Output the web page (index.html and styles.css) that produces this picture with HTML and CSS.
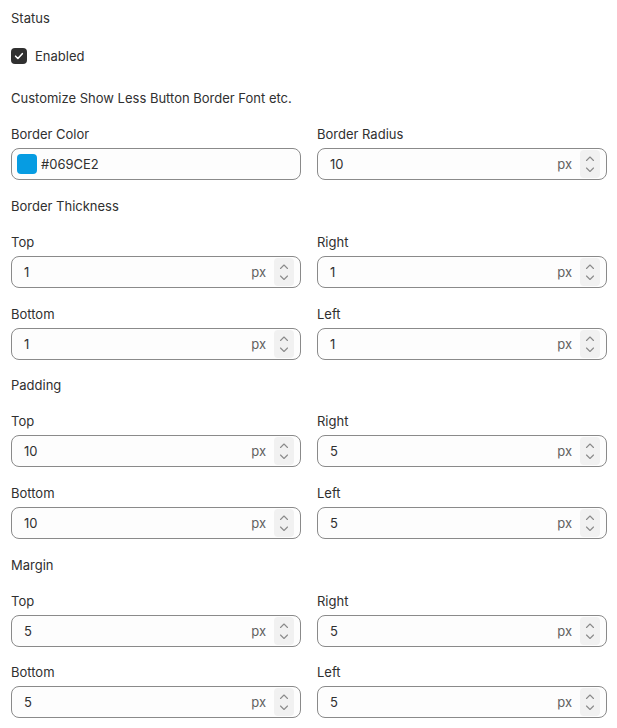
FILE: index.html
```html
<!DOCTYPE html>
<html lang="en">
<head>
    <meta charset="UTF-8">
    <title>Show Less Button Border</title>
    <link rel="stylesheet" href="styles.css">
</head>
<body>
    <div class="settings">
        <div class="status">
            <div class="title">Status</div>
            <label class="check">
                <span class="box">
                    <svg width="16" height="16" viewBox="0 0 16 16"><path d="M4.6 8.2l2.3 2.3 4.4-4.8" fill="none" stroke="#fff" stroke-width="1.6" stroke-linecap="round" stroke-linejoin="round"/></svg>
                </span>
                <span>Enabled</span>
            </label>
        </div>

        <div class="intro">Customize Show Less Button Border Font etc.</div>

        <div class="grid">
            <div class="field">
                <div class="label">Border Color</div>
                <div class="input color">
                    <span class="swatch"></span>
                    <span class="value">#069CE2</span>
                </div>
            </div>
            <div class="field">
                <div class="label">Border Radius</div>
                <div class="input number">
                    <span class="value">10</span>
                    <span class="suffix">px</span>
                    <span class="spinner"><svg width="20" height="28" viewBox="0 0 20 28"><path d="M6.5 10.5L10 7l3.5 3.5M6.5 18l3.5 3.5 3.5-3.5" fill="none" stroke="#8a8a8a" stroke-width="1.1" stroke-linecap="round" stroke-linejoin="round"/></svg></span>
                </div>
            </div>
        </div>

        <div class="title">Border Thickness</div>
        <div class="grid" id="border"></div>

        <div class="title tight">Padding</div>
        <div class="grid" id="padding"></div>

        <div class="title">Margin</div>
        <div class="grid tight-rows" id="margin"></div>
    </div>

    <script>
        const groups = {
            border: { Top: 1, Right: 1, Bottom: 1, Left: 1 },
            padding: { Top: 10, Right: 5, Bottom: 10, Left: 5 },
            margin: { Top: 5, Right: 5, Bottom: 5, Left: 5 }
        };

        const spinner = document.querySelector(".spinner").innerHTML;

        for (const id in groups) {
            const grid = document.getElementById(id);
            let html = "";
            for (const side in groups[id]) {
                html += `
                <div class="field">
                    <div class="label">${side}</div>
                    <div class="input number">
                        <span class="value">${groups[id][side]}</span>
                        <span class="suffix">px</span>
                        <span class="spinner">${spinner}</span>
                    </div>
                </div>`;
            }
            grid.innerHTML = html;
        }
    </script>
</body>
</html>
```

FILE: styles.css
```css
body {
    margin: 0;
    font-family: Inter, "Noto Sans", sans-serif;
    font-size: 13px;
    line-height: 20px;
    color: #303030;
    background: #fff;
}

.settings {
    padding: 8px 10px 8px 11px;
    display: flex;
    flex-direction: column;
    gap: 16px;
}

.status .title {
    margin-bottom: 18px;
}

.check {
    display: flex;
    align-items: center;
    gap: 8px;
}

.box {
    width: 16px;
    height: 16px;
    border-radius: 4px;
    background: #303030;
    display: flex;
}

.intro {
    margin-top: 6px;
}

.title.tight {
    margin-top: -1px;
}

.grid {
    display: grid;
    grid-template-columns: 1fr 1fr;
    column-gap: 16px;
    row-gap: 16px;
}

.grid.tight-rows {
    row-gap: 15px;
}

.label {
    margin-bottom: 4px;
}

.input {
    height: 32px;
    box-sizing: border-box;
    border: 1px solid #8a8a8a;
    border-radius: 8px;
    background: #fdfdfd;
    display: flex;
    align-items: center;
}

.color {
    padding-left: 5px;
    gap: 4px;
}

.swatch {
    width: 20px;
    height: 20px;
    border-radius: 4px;
    background: #069ce2;
}

.number {
    padding: 0 6px 0 12px;
}

.number .value {
    flex: 1;
}

.suffix {
    color: #616161;
    margin-right: 8px;
}

.spinner {
    width: 20px;
    height: 28px;
    border-radius: 4px;
    background: #f1f1f1;
    display: flex;
}
```
